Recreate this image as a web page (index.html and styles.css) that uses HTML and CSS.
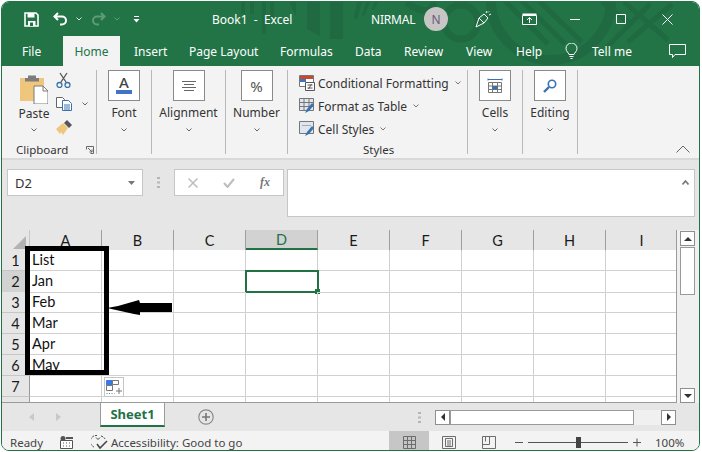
FILE: index.html
```html
<!DOCTYPE html>
<html lang="en">
<head>
<meta charset="utf-8">
<title>Book1 - Excel</title>
<link rel="stylesheet" href="styles.css">
</head>
<body>
<div class="window">
  <svg class="decor" width="698" height="64" viewBox="0 0 698 64">
    <g fill="#1f6a41">
      <path d="M239 0h4v12h-4zM248 0h4v12h-4zM260 0h4v32h-4zM268 0h4v16h-4zM287 0h7v14zM305 0h13v34l-13-7zM328 0h13v37h-13z"/>
      <path d="M360 0l-5 18-3-2 3-16zM368 0l-6 14-2-1 4-13zM376 0l-4 8-2-1 3-7z"/>
    </g>
    <g fill="none" stroke="#1f6a41">
      <circle cx="459" cy="20" r="17" stroke-width="7"/>
      <path d="M405 0a30 24 0 0 0 22 9a22 22 0 0 0 5 -9" stroke-width="7"/>
      <circle cx="549" cy="-2" r="60" stroke-width="10"/>
      <path d="M500 -4l46 46M517 -4l46 46M534 -4l46 44M600 0l26 20M622 0l44 38M648 2l-44 44M670 2l-44 38" stroke-width="5"/>
    </g>
  </svg>

  <header class="titlebar">
    <svg class="ic save" width="15" height="15" viewBox="0 0 15 15"><path d="M1 1h11l2 2v11H1z" fill="none" stroke="#fff" stroke-width="1.6"/><path d="M3.5 1h7v4.500h-7zM4 9h7.500v5H4z" fill="#fff"/><path d="M6 10.500h3v3.500H6z" fill="#217346"/></svg>
    <svg class="ic undo" width="15" height="14" viewBox="0 0 15 14"><path d="M5 1L1.500 4.500 5 8M2 4.500h7a4 4 0 0 1 0 8H7" fill="none" stroke="#fff" stroke-width="2"/></svg>
    <svg class="ic tiny" width="6" height="4" viewBox="0 0 6 4"><path d="M.5.500L3 3 5.500.500" fill="none" stroke="#d5e5db" stroke-width="1"/></svg>
    <svg class="ic redo" width="15" height="14" viewBox="0 0 15 14"><path d="M10 1l3.500 3.500L10 8M13 4.500H6a4 4 0 0 0 0 8h2" fill="none" stroke="#5f9a7b" stroke-width="2"/></svg>
    <svg class="ic tiny dim" width="6" height="4" viewBox="0 0 6 4"><path d="M.5.500L3 3 5.500.500" fill="none" stroke="#5f9a7b" stroke-width="1"/></svg>
    <svg class="ic qat" width="7" height="7" viewBox="0 0 7 7"><path d="M1 .5h5" stroke="#fff" fill="none"/><path d="M.5 3h6L3.500 6.500z" fill="#fff"/></svg>
    <span class="doc-title">Book1&nbsp; -&nbsp; Excel</span>
    <span class="user">NIRMAL</span>
    <span class="avatar">N</span>
    <svg class="ic pen" width="17" height="18" viewBox="0 0 17 18"><path d="M1 17l3-9 5 5zM4 8l5-4 4 4-4 5zM11 3l1-2M14 5l2-1M13 2.500l1-1" fill="none" stroke="#fff" stroke-width="1"/></svg>
    <svg class="ic display" width="15" height="12" viewBox="0 0 15 12"><path d="M.5 2.500h14v9H.5z" fill="none" stroke="#fff"/><path d="M.5.500h14v2H.5z" fill="#fff"/><path d="M7.500 10V5M5 7l2.500-2.500L10 7" fill="none" stroke="#fff"/></svg>
    <svg class="ic min" width="10" height="1" viewBox="0 0 10 1"><path d="M0 .5h10" stroke="#fff"/></svg>
    <svg class="ic max" width="10" height="10" viewBox="0 0 10 10"><path d="M.5.500h9v9h-9z" fill="none" stroke="#fff"/></svg>
    <svg class="ic close" width="11" height="11" viewBox="0 0 11 11"><path d="M.5.500l10 10M10.500.500l-10 10" fill="none" stroke="#fff"/></svg>
  </header>

  <nav class="tabs">
    <span class="tab t-file">File</span>
    <span class="tab t-home">Home</span>
    <span class="tab t-insert">Insert</span>
    <span class="tab t-layout">Page Layout</span>
    <span class="tab t-formulas">Formulas</span>
    <span class="tab t-data">Data</span>
    <span class="tab t-review">Review</span>
    <span class="tab t-view">View</span>
    <span class="tab t-help">Help</span>
    <svg class="bulb" width="13" height="17" viewBox="0 0 13 17"><path d="M4 11.500C3.500 9.500 1 8.500 1 5.500a5.500 5.500 0 0 1 11 0c0 3-2.500 4-3 6zM4.500 13.500h4M5.500 15.500h2" fill="none" stroke="#fff"/></svg>
    <span class="tab t-tell">Tell me</span>
    <svg class="comment" width="17" height="15" viewBox="0 0 17 15"><path d="M.5.500h16v10H6l-2.500 3v-3h-3z" fill="none" stroke="#fff"/></svg>
  </nav>

  <section class="ribbon">
    <div class="group g-clip">
      <div class="clip-tools">
        <div class="paste">
          <svg width="28" height="30" viewBox="0 0 28 30"><path d="M0 4h24v23H0z" fill="#eec77c" transform="translate(0 0)"/><path d="M8 1.500h8V4h3v3.500H5V4h3z" fill="#7d7d7d"/><path d="M14 12h9l5 5v13H14z" fill="#fff" stroke="#7a7a7a"/><path d="M23 12v5h5" fill="none" stroke="#7a7a7a"/></svg>
          <span class="paste-label">Paste</span>
          <svg class="chev" width="6" height="4" viewBox="0 0 6 4"><path d="M.5.500L3 3 5.500.500" fill="none" stroke="#666"/></svg>
        </div>
        <div class="clip-small">
          <svg width="15" height="16" viewBox="0 0 15 16"><path d="M4 1l6 9M11 1l-6 9" stroke="#555" fill="none" stroke-width="1.300"/><circle cx="3.500" cy="13" r="2.500" fill="none" stroke="#3a72ad" stroke-width="1.300"/><circle cx="11.500" cy="13" r="2.500" fill="none" stroke="#3a72ad" stroke-width="1.300"/></svg>
          <span class="copy-row"><svg width="16" height="14" viewBox="0 0 16 14"><path d="M.5.500h6l2 2v8h-8z" fill="#fff" stroke="#666"/><path d="M6.500 3.500h6l3 3v7h-9z" fill="#fff" stroke="#3a72ad"/><path d="M8 8h6M8 10h6M8 12h6" stroke="#3a72ad"/></svg><svg class="chev-copy" width="6" height="4" viewBox="0 0 6 4"><path d="M.5.500L3 3 5.500.500" fill="none" stroke="#666"/></svg></span>
          <svg width="16" height="15" viewBox="0 0 16 15"><path d="M0 9l7-6 5 5-5 7-2-3-1 2z" fill="#eec77c"/><path d="M8 3l3-3 5 5-3 3z" fill="#555"/></svg>
        </div>
      </div>
      <div class="group-label clip-label"><span>Clipboard</span><svg width="8" height="8" viewBox="0 0 8 8"><path d="M.5 3.500v-3h7v7h-3M2 2l4 4M6 3.500V6H3.500" fill="none" stroke="#666"/></svg></div>
    </div>

    <div class="group g-col g-font">
      <span class="big"><svg width="16" height="19" viewBox="0 0 16 19"><text x="8" y="12" text-anchor="middle" class="icon-a">A</text><path d="M0 14h16v4H0z" fill="#4472c4"/></svg></span>
      <span class="g-name">Font</span>
      <svg class="chev" width="6" height="4" viewBox="0 0 6 4"><path d="M.5.500L3 3 5.500.500" fill="none" stroke="#666"/></svg>
    </div>

    <div class="group g-col g-align">
      <span class="big"><svg width="14" height="10" viewBox="0 0 14 10"><path d="M0 .5h14M2 3.500h10M0 6.500h14M2 9.500h10" stroke="#666"/></svg></span>
      <span class="g-name">Alignment</span>
      <svg class="chev" width="6" height="4" viewBox="0 0 6 4"><path d="M.5.500L3 3 5.500.500" fill="none" stroke="#666"/></svg>
    </div>

    <div class="group g-col g-number">
      <span class="big percent">%</span>
      <span class="g-name">Number</span>
      <svg class="chev" width="6" height="4" viewBox="0 0 6 4"><path d="M.5.500L3 3 5.500.500" fill="none" stroke="#666"/></svg>
    </div>

    <div class="group g-styles">
      <div class="style-row">
        <svg width="16" height="16" viewBox="0 0 16 16"><path d="M.5.500h14v11H.5z" fill="#fff" stroke="#777"/><path d="M1 1h6v3H1z" fill="#c8492b"/><path d="M1 4h6v3H1z" fill="#4472c4"/><path d="M7 1h7v3H7z" fill="#c8492b"/><path d="M6.500 7.500h9v8h-9z" fill="#fff" stroke="#555"/><path d="M8.500 10h5M8.500 13h5M12.500 9l-3 5" stroke="#555" fill="none"/></svg>
        <span>Conditional Formatting</span>
        <svg class="chev-s" width="6" height="4" viewBox="0 0 6 4"><path d="M.5.500L3 3 5.500.500" fill="none" stroke="#777"/></svg>
      </div>
      <div class="style-row">
        <svg width="16" height="16" viewBox="0 0 16 16"><path d="M.5.500h14v12H.5zM.5 4.500h14M.5 8.500h14M5 .5v12M10 .5v12" fill="#dfe6f0" stroke="#777"/><path d="M6 15l2-4 5-6 2 2-5 6z" fill="#3a72ad"/></svg>
        <span>Format as Table</span>
        <svg class="chev-s" width="6" height="4" viewBox="0 0 6 4"><path d="M.5.500L3 3 5.500.500" fill="none" stroke="#777"/></svg>
      </div>
      <div class="style-row">
        <svg width="16" height="16" viewBox="0 0 16 16"><path d="M.5.500h14v12H.5z" fill="#dfe6f0" stroke="#777"/><path d="M3 4.500h9" stroke="#aaa"/><path d="M6 15l2-4 5-6 2 2-5 6z" fill="#3a72ad"/></svg>
        <span>Cell Styles</span>
        <svg class="chev-s" width="6" height="4" viewBox="0 0 6 4"><path d="M.5.500L3 3 5.500.500" fill="none" stroke="#777"/></svg>
      </div>
      <div class="group-label styles-label">Styles</div>
    </div>

    <div class="group g-col g-cells">
      <span class="big"><svg width="16" height="16" viewBox="0 0 16 16"><path d="M1.500 4.500h13v10h-13zM1.500 8h13M1.500 11.500h13M5.500 4.500v10M10.500 4.500v10" fill="#fff" stroke="#777"/><path d="M5.500 8h5v3.500h-5z" fill="#3a72ad"/><path d="M1 1.500h14M1 .5v2M15 .5v2" stroke="#3a72ad" fill="none"/></svg></span>
      <span class="g-name">Cells</span>
      <svg class="chev" width="6" height="4" viewBox="0 0 6 4"><path d="M.5.500L3 3 5.500.500" fill="none" stroke="#666"/></svg>
    </div>

    <div class="group g-col g-editing">
      <span class="big"><svg width="14" height="14" viewBox="0 0 14 14"><circle cx="9" cy="5" r="3.700" fill="none" stroke="#3a72ad" stroke-width="1.600"/><path d="M6 8l-5 5" stroke="#3a72ad" stroke-width="2.400"/></svg></span>
      <span class="g-name">Editing</span>
      <svg class="chev" width="6" height="4" viewBox="0 0 6 4"><path d="M.5.500L3 3 5.500.500" fill="none" stroke="#666"/></svg>
    </div>

    <svg class="collapse" width="14" height="8" viewBox="0 0 14 8"><path d="M.5 7.500L7 1l6.500 6.500" fill="none" stroke="#666"/></svg>
  </section>

  <section class="formula">
    <div class="namebox"><span>D2</span><svg width="7" height="4" viewBox="0 0 7 4"><path d="M0 0h7L3.500 4z" fill="#777"/></svg></div>
    <svg class="fdots" width="3" height="11" viewBox="0 0 3 11"><path d="M0 0h3v2H0zM0 4.500h3v2H0zM0 9h3v2H0z" fill="#b5b5b5"/></svg>
    <div class="fbuttons">
      <svg width="10" height="10" viewBox="0 0 10 10"><path d="M.5.500l9 9M9.500.500l-9 9" stroke="#bdbdbd" stroke-width="1.500" fill="none"/></svg>
      <svg width="12" height="10" viewBox="0 0 12 10"><path d="M1 5l3.500 4L11 1" stroke="#bdbdbd" stroke-width="2" fill="none"/></svg>
      <span class="fx">fx</span>
    </div>
    <div class="finput"><svg width="7" height="5" viewBox="0 0 7 5"><path d="M.5 4.500L3.500 1l3 3.500" fill="none" stroke="#777" stroke-width="1.600"/></svg></div>
  </section>

  <section class="sheet">
    <div class="sheet-main">
      <div class="row head">
        <span class="rh"><svg width="13" height="13" viewBox="0 0 13 13"><path d="M13 0v13H0z" fill="#b3b3b3"/></svg></span>
        <span class="ch">A</span><span class="ch">B</span><span class="ch">C</span><span class="ch on">D</span><span class="ch">E</span><span class="ch">F</span><span class="ch">G</span><span class="ch">H</span><span class="ch">I</span>
      </div>
      <div class="row"><span class="rh">1</span><span class="c">List</span><span class="c"></span><span class="c"></span><span class="c"></span><span class="c"></span><span class="c"></span><span class="c"></span><span class="c"></span><span class="c"></span></div>
      <div class="row"><span class="rh on">2</span><span class="c">Jan</span><span class="c"></span><span class="c"></span><span class="c sel"></span><span class="c"></span><span class="c"></span><span class="c"></span><span class="c"></span><span class="c"></span></div>
      <div class="row"><span class="rh">3</span><span class="c">Feb</span><span class="c"></span><span class="c"></span><span class="c"></span><span class="c"></span><span class="c"></span><span class="c"></span><span class="c"></span><span class="c"></span></div>
      <div class="row"><span class="rh">4</span><span class="c">Mar</span><span class="c"></span><span class="c"></span><span class="c"></span><span class="c"></span><span class="c"></span><span class="c"></span><span class="c"></span><span class="c"></span></div>
      <div class="row"><span class="rh">5</span><span class="c">Apr</span><span class="c"></span><span class="c"></span><span class="c"></span><span class="c"></span><span class="c"></span><span class="c"></span><span class="c"></span><span class="c"></span></div>
      <div class="row"><span class="rh">6</span><span class="c">May</span><span class="c"></span><span class="c"></span><span class="c"></span><span class="c"></span><span class="c"></span><span class="c"></span><span class="c"></span><span class="c"></span></div>
      <div class="row"><span class="rh">7</span><span class="c"></span><span class="c"></span><span class="c"></span><span class="c"></span><span class="c"></span><span class="c"></span><span class="c"></span><span class="c"></span><span class="c"></span></div>
      <div class="row"><span class="rh"></span><span class="c"></span><span class="c"></span><span class="c"></span><span class="c"></span><span class="c"></span><span class="c"></span><span class="c"></span><span class="c"></span><span class="c"></span></div>
      <div class="annot-box"></div>
      <svg class="annot-arrow" width="66" height="18" viewBox="0 0 66 18"><path d="M0 9L11 7 32 1 33 4 65 4V13H33L33 16 27 15z" fill="#000"/></svg>
      <div class="paste-opts"><svg width="16" height="15" viewBox="0 0 16 15"><path d="M.5.500h6v5h-6z" fill="#3b78e7" stroke="#3b78e7"/><path d="M6.500.500h6v4h-6zM.5 5.500h6v5h-6z" fill="#fff" stroke="#777"/><path d="M.5 13.500h8" stroke="#777" stroke-dasharray="1 1.500"/><path d="M13 8v6M10 11h6" stroke="#777"/></svg></div>
    </div>
    <div class="vscroll">
      <span class="sbtn"><svg width="8" height="4" viewBox="0 0 8 4"><path d="M4 0l4 4H0z" fill="#333"/></svg></span>
      <span class="vthumb"></span>
      <span class="vspace"></span>
      <span class="sbtn"><svg width="8" height="4" viewBox="0 0 8 4"><path d="M0 0h8L4 4z" fill="#333"/></svg></span>
    </div>
  </section>

  <section class="sheetbar">
    <svg class="nav-l" width="5" height="8" viewBox="0 0 5 8"><path d="M5 0v8L0 4z" fill="#c8c8c8"/></svg>
    <svg class="nav-r" width="5" height="8" viewBox="0 0 5 8"><path d="M0 0v8l5-4z" fill="#c8c8c8"/></svg>
    <span class="sheet-tab">Sheet1</span>
    <svg class="add" width="16" height="16" viewBox="0 0 16 16"><circle cx="8" cy="8" r="7.200" fill="none" stroke="#8a8a8a" stroke-width="1.200"/><path d="M8 4v8M4 8h8" stroke="#777" stroke-width="1.600"/></svg>
    <svg class="bdots" width="3" height="11" viewBox="0 0 3 11"><path d="M0 0h3v2H0zM0 4.500h3v2H0zM0 9h3v2H0z" fill="#b5b5b5"/></svg>
    <div class="hscroll">
      <span class="sbtn h"><svg width="4" height="8" viewBox="0 0 4 8"><path d="M4 0v8L0 4z" fill="#333"/></svg></span>
      <span class="hthumb"></span>
      <span class="hspace"></span>
      <span class="sbtn h"><svg width="4" height="8" viewBox="0 0 4 8"><path d="M0 0v8l4-4z" fill="#333"/></svg></span>
    </div>
  </section>

  <footer class="status">
    <span class="ready">Ready</span>
    <svg class="macro" width="13" height="13" viewBox="0 0 13 13"><circle cx="3" cy="2.500" r="2.500" fill="#555"/><path d="M6 1h7v2H6z" fill="#555"/><path d="M.5 4.500h12v8H.5z" fill="#fff" stroke="#555"/><path d="M3 7h1M6 7h1M9 7h1M3 10h1M6 10h1M9 10h1" stroke="#555"/></svg>
    <svg class="access" width="17" height="16" viewBox="0 0 17 16"><path d="M6 1.500A6 6 0 0 0 3 13M10 2a6 6 0 0 1 4 3" fill="none" stroke="#444" stroke-dasharray="2 1"/><path d="M5 3.500l2 2 2-2" fill="none" stroke="#444"/><path d="M6 10l3 4 7-7" fill="none" stroke="#444" stroke-width="1.500"/></svg>
    <span class="acc-text">Accessibility: Good to go</span>
    <span class="view on"><svg width="13" height="13" viewBox="0 0 13 13"><path d="M.5.500h12v12H.5zM.5 4.500h12M.5 8.500h12M4.500.5v12M8.500.5v12" fill="none" stroke="#6d6d6d"/></svg></span>
    <span class="view"><svg width="14" height="13" viewBox="0 0 14 13"><path d="M.5.500h13v12H.5z" fill="none" stroke="#6d6d6d"/><path d="M3.500 2.500h7v8h-7zM5 5h4M5 7h4M5 9h4" fill="none" stroke="#6d6d6d"/></svg></span>
    <span class="view"><svg width="14" height="13" viewBox="0 0 14 13"><path d="M.5.500h13v12H.5zM.5 8.500h7v-8M7.500 8.500h-0M3.500.5v5" fill="none" stroke="#6d6d6d"/></svg></span>
    <svg class="zoom" width="127" height="11" viewBox="0 0 127 11"><path d="M0 5.500h8M13 5.500h100M118 5.500h8M122 1.500v8" stroke="#555" fill="none"/><path d="M61 0h5v11h-5z" fill="#444"/></svg>
    <span class="pct">100%</span>
  </footer>
</div>
</body>
</html>
```

FILE: styles.css
```css
* { box-sizing: border-box; }
html, body { margin: 0; padding: 0; background: #fff; }
body { width: 702px; height: 452px; padding: 1px 0 0 1px; overflow: hidden; font-family: "Noto Sans", "Open Sans", sans-serif; }
svg { display: block; flex: none; }

.window {
  position: relative; width: 699px; height: 450px; border: 1px solid #217346; border-radius: 8px;
  overflow: hidden; display: flex; flex-direction: column; background: #f3f3f3;
}
.decor { position: absolute; left: 0; top: 0; }

.titlebar, .tabs { position: relative; background: transparent; color: #fff; display: flex; align-items: center; flex: none; }
.window::before { content: ""; position: absolute; left: 0; top: 0; width: 100%; height: 64px; background: #227447; }
.decor { z-index: 0; }
.titlebar { height: 34px; font-size: 12px; }
.ic.save { margin-left: 22px; }
.ic.undo { margin-left: 14px; }
.ic.tiny { margin-left: 8px; }
.ic.redo { margin-left: 9px; }
.ic.tiny.dim { margin-left: 8px; }
.ic.qat { margin-left: 13px; }
.doc-title { margin-left: 72px; width: 90px; white-space: nowrap; }
.user { margin-left: 69px; width: 44px; white-space: nowrap; letter-spacing: -.2px; }
.avatar { margin-left: 9px; width: 24px; height: 24px; border-radius: 50%; background: #c8c6c4; color: #6b5a7e; display: flex; align-items: center; justify-content: center; font-size: 12px; }
.ic.pen { margin-left: 27px; }
.ic.display { margin-left: 30px; }
.ic.min { margin-left: 33px; }
.ic.max { margin-left: 36px; }
.ic.close { margin-left: 36px; }

.tabs { height: 30px; font-size: 12px; }
.tab { white-space: nowrap; }
.t-file { margin-left: 20px; width: 41px; }
.t-home { width: 57px; height: 30px; background: #f3f3f3; color: #217346; display: flex; align-items: center; justify-content: center; }
.t-insert { margin-left: 14px; width: 55px; }
.t-layout { width: 91px; }
.t-formulas { width: 75px; }
.t-data { width: 49px; }
.t-review { width: 62px; }
.t-view { width: 50px; }
.t-help { width: 49px; }
.bulb { margin-right: 14px; }
.t-tell { width: 77px; }

.ribbon { position: relative; height: 94px; flex: none; display: flex; background: #f3f3f3; color: #333; border-bottom: 2px solid #d9d9d9; font-size: 12px; }
.group { position: relative; height: 84px; margin-top: 4px; border-right: 1px solid #b8b8b8; }
.g-col { display: flex; flex-direction: column; align-items: center; }
.big { width: 32px; height: 31px; background: #fff; border: 1px solid #8a8a8a; display: flex; align-items: center; justify-content: center; flex: none; }
.g-name { margin-top: 3px; line-height: 18px; }
.g-col .chev { margin-top: 6px; }
.icon-a { font: 500 15px "Noto Sans", sans-serif; fill: #444; }
.percent { font-size: 15px; color: #555; }

.g-clip { width: 95px; }
.clip-tools { display: flex; padding: 0 0 0 17px; }
.paste { width: 36px; display: flex; flex-direction: column; align-items: center; padding: 4px 6px 0 0; margin-right: 0; }
.paste > svg:first-child { margin-top: 0; }
.paste-label { margin-top: 1px; line-height: 17px; }
.paste .chev { margin-top: 6px; }
.clip-small { padding: 2px 0 0 1px; display: flex; flex-direction: column; gap: 9px; }
.copy-row { display: flex; align-items: center; }
.chev-copy { margin-left: 10px; }
.clip-label { left: 14px; width: 78px; display: flex; align-items: center; justify-content: space-between; }
.group-label { position: absolute; top: 71px; line-height: 18px; font-size: 11.500px; }
.g-font { width: 55px; padding-top: 0; margin-left: 0; padding-left: 0; }
.g-align { width: 74px; }
.g-number { width: 62px; }
.g-styles { width: 180px; padding: 4px 0 0 11px; display: flex; flex-direction: column; gap: 5px; font-size: 12px; }
.style-row { display: flex; align-items: center; gap: 3px; height: 18px; white-space: nowrap; }
.chev-s { margin-left: 3px; }
.styles-label { left: 75px; }
.g-cells { width: 55px; }
.g-editing { width: 55px; }
.collapse { position: absolute; left: 674px; top: 79px; }

.formula { position: relative; height: 70px; flex: none; background: #e6e6e6; display: flex; align-items: flex-start; padding: 9px 0 0 5px; font-size: 13px; }
.namebox { width: 136px; height: 27px; background: #fff; border: 1px solid #c6c6c6; display: flex; align-items: center; justify-content: space-between; padding: 0 7px; color: #333; }
.fdots { margin: 8px 14px 0 14px; }
.fbuttons { width: 110px; height: 27px; background: #fff; border: 1px solid #c6c6c6; display: flex; align-items: center; justify-content: space-between; padding: 0 13px 0 13px; }
.fx { font: italic 700 12px "Liberation Serif", serif; color: #777; }
.finput { width: 408px; height: 48px; margin-left: 3px; background: #fff; border: 1px solid #c6c6c6; display: flex; justify-content: flex-end; padding: 10px 5px 0 0; }

.sheet { position: relative; height: 173px; flex: none; display: flex; background: #e6e6e6; font-family: "Lato", sans-serif; }
.sheet-main { position: relative; width: 676px; height: 173px; overflow: hidden; background: #fff; border-bottom: 1px solid #9a9a9a; border-right: 1px solid #9a9a9a; }
.row { display: grid; grid-template-columns: 28px repeat(9, 72px); height: 21px; }
.row.head { height: 20px; border-bottom: 1px solid #9a9a9a; background: #e6e6e6; }
.row:nth-child(2) { height: 21px; }
.rh { background: #e6e6e6; border-right: 1px solid #9a9a9a; border-bottom: 1px solid #c6c6c6; font-size: 14.500px; color: #1a1a1a; display: flex; align-items: center; justify-content: center; }
.rh.on { background: #d2d2d2; }
.head .rh { border: 0; border-right: 1px solid #c6c6c6; justify-content: flex-end; align-items: flex-end; padding: 0 3px 1px 0; }
.ch { background: #e6e6e6; border-right: 1px solid #9f9f9f; font-size: 14.500px; color: #1a1a1a; display: flex; align-items: center; justify-content: center; line-height: 19px; }
.ch.on { background: #d2d2d2; color: #217346; border-bottom: 2px solid #217346; height: 20px; }
.c { position: relative; border-right: 1px solid #d0d0d0; border-bottom: 1px solid #d0d0d0; font-size: 14.500px; color: #111; padding-left: 2px; line-height: 20px; white-space: nowrap; }
.c.sel { outline: 2px solid #217346; outline-offset: -2px; margin: -1px 0 0 -1px; width: 74px; height: 23px; }
.c.sel::after { content: ""; position: absolute; right: -2px; bottom: -2px; width: 5px; height: 5px; background: #217346; border: 0; }
.annot-box { position: absolute; left: 23px; top: 16px; width: 84px; height: 129px; border: 5px solid #000; }
.annot-arrow { position: absolute; left: 105px; top: 69px; }
.paste-opts { position: absolute; left: 102px; top: 147px; width: 20px; height: 20px; background: #fff; border: 1px solid #c6c6c6; padding: 2px 1px; }

.vscroll { width: 22px; height: 173px; padding: 1px 5px 0 3px; display: flex; flex-direction: column; background: #f0f0f0; }
.sbtn { width: 15px; height: 15px; background: #fff; border: 1px solid #8f8f8f; display: flex; align-items: center; justify-content: center; flex: none; }
.vthumb { width: 15px; height: 48px; background: #fff; border: 1px solid #9a9a9a; flex: none; margin-top: 1px; }
.vspace { flex: 1; }

.sheetbar { height: 28px; flex: none; display: flex; align-items: center; background: #e6e6e6; position: relative; }
.nav-l { margin-left: 27px; }
.nav-r { margin-left: 22px; }
.sheet-tab { margin: -4px 0 0 39px; width: 65px; height: 24px; background: #fff; border-bottom: 2px solid #217346; border-right: 1px solid #9a9a9a; border-left: 1px solid #9a9a9a; color: #217346; font: 700 13px "Noto Sans", sans-serif; display: flex; align-items: center; justify-content: center; }
.add { margin-left: 33px; }
.bdots { margin-left: 204px; }
.hscroll { margin-left: 14px; width: 241px; height: 15px; display: flex; background: #f0f0f0; }
.sbtn.h { width: 15px; height: 15px; }
.hthumb { width: 184px; height: 15px; background: #fff; border: 1px solid #9a9a9a; }
.hspace { flex: 1; }

.status { height: 22px; flex: 1; display: flex; align-items: center; background: #f3f3f3; font-size: 11.500px; color: #444; }
.ready { margin-left: 8px; width: 50px; }
.access { margin-left: 18px; }
.acc-text { margin-left: 3px; width: 278px; white-space: nowrap; }
.view { width: 40px; height: 22px; display: flex; align-items: center; justify-content: center; }
.view.on { background: #c6c6c6; }
.zoom { margin-left: 6px; }
.pct { margin-left: 13px; white-space: nowrap; }
```
